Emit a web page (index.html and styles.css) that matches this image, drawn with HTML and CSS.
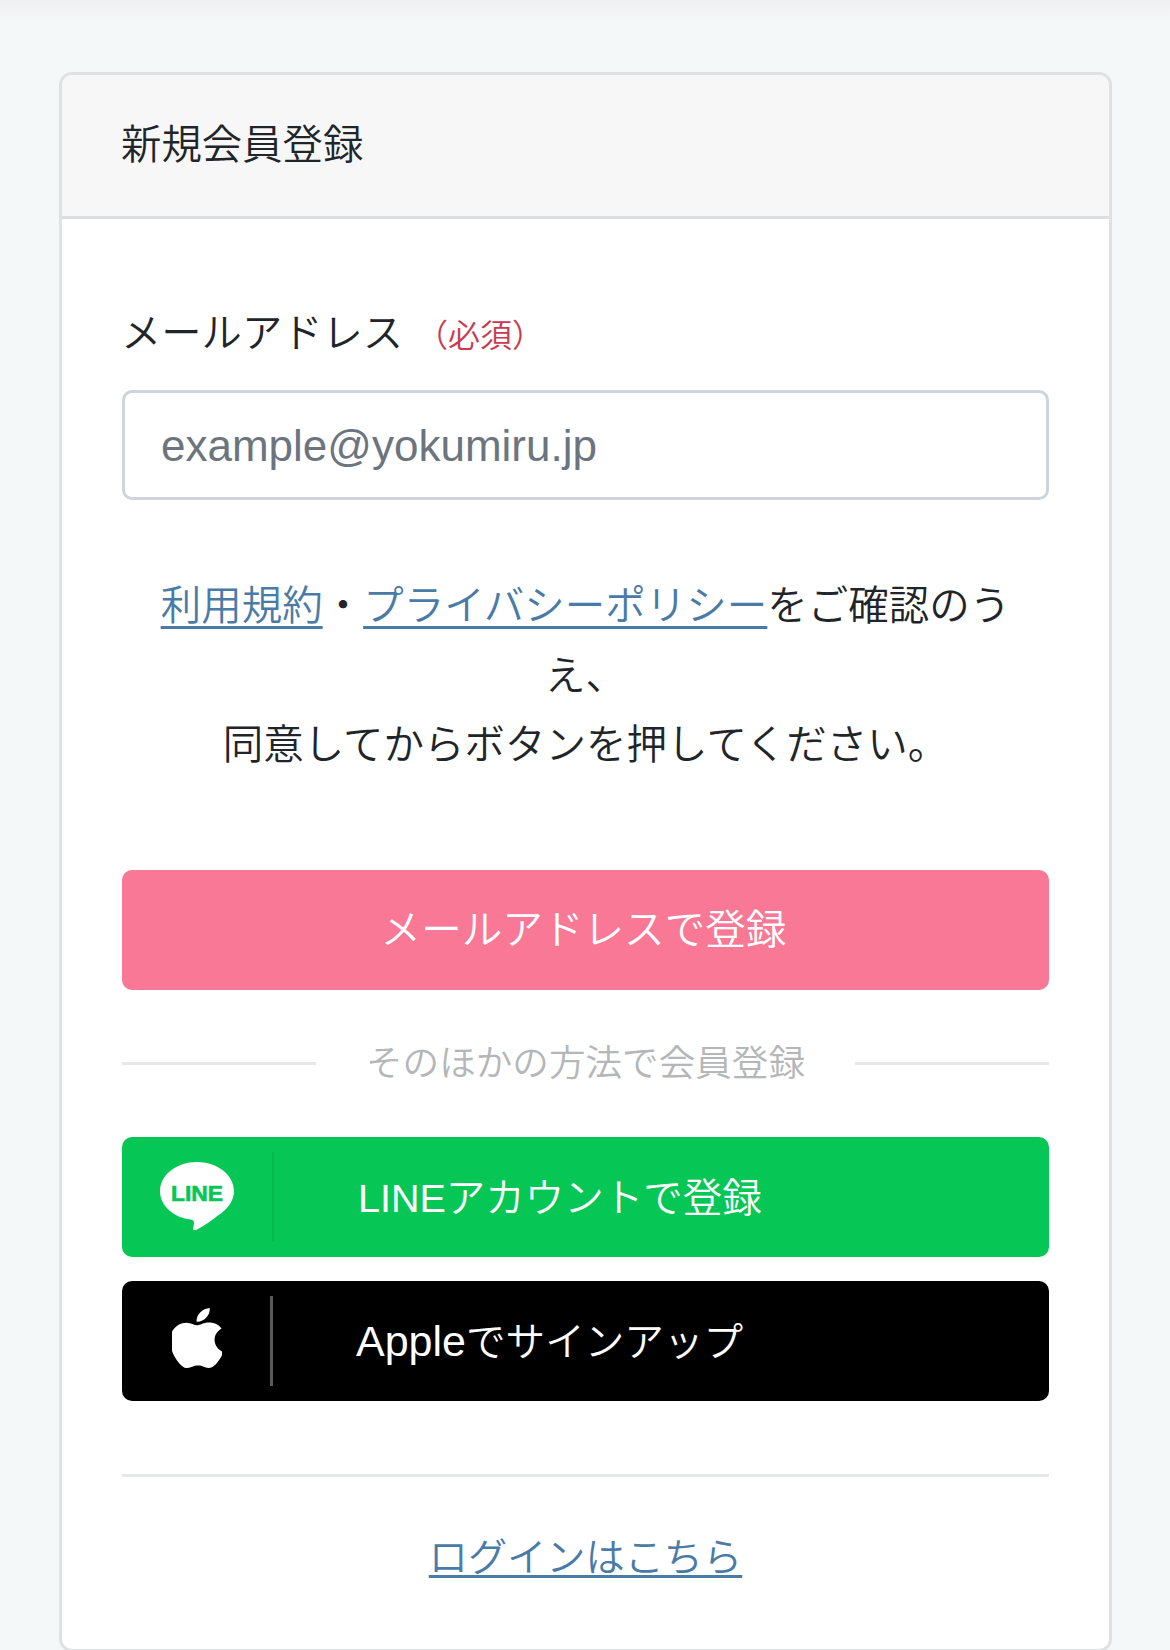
FILE: index.html
```html
<!DOCTYPE html>
<html lang="ja">
<head>
<meta charset="utf-8">
<title>新規会員登録</title>
<link rel="stylesheet" href="styles.css">
</head>
<body>
<main class="page">
  <section class="card">
    <h1 class="card-header">新規会員登録</h1>
    <div class="card-body">
      <label class="field-label" for="email">メールアドレス<span class="required">（必須）</span></label>
      <input class="field-input" id="email" type="email" placeholder="example@yokumiru.jp">
      <p class="terms"><a href="#">利用規約</a>・<a href="#">プライバシーポリシー</a>をご確認のう<br>え、<br>同意してからボタンを押してください。</p>
      <a class="btn btn-mail" href="#">メールアドレスで登録</a>
      <div class="divider"><span class="divider-text">そのほかの方法で会員登録</span></div>
      <a class="btn btn-social btn-line" href="#">
        <span class="btn-icon">
          <svg class="icon-line" viewBox="0 0 74 70" width="74" height="70" aria-hidden="true">
            <path class="bubble" d="M37 0C16.600 0 0 13 0 29c0 14.300 12.800 26.300 30.500 28.500 1.200.2 2.800.7 3.200 1.700.4.900.3 2.300.1 3.200l-.5 3.100c-.2 1-.8 3.800 3.100 2.200 3.800-1.600 13.500-7.800 21.500-14.200C67.500 47.500 74 39 74 29 74 13 57.400 0 37 0z"/>
            <text class="line-word" x="37" y="38.500" text-anchor="middle">LINE</text>
          </svg>
        </span>
        <span class="btn-sep"></span>
        <span class="btn-label">LINEアカウントで登録</span>
      </a>
      <a class="btn btn-social btn-apple" href="#">
        <span class="btn-icon">
          <svg class="icon-apple" viewBox="2.9 0 18.4 24" width="50" height="60" preserveAspectRatio="none" aria-hidden="true">
            <path d="M12.152 6.896c-.948 0-2.415-1.078-3.96-1.04-2.04.027-3.91 1.183-4.961 3.014-2.117 3.675-.546 9.103 1.519 12.09 1.013 1.454 2.208 3.09 3.792 3.039 1.52-.065 2.09-.987 3.935-.987 1.831 0 2.35.987 3.96.948 1.637-.026 2.676-1.48 3.676-2.948 1.156-1.688 1.636-3.325 1.662-3.415-.039-.013-3.182-1.221-3.22-4.857-.026-3.04 2.48-4.494 2.597-4.559-1.429-2.09-3.623-2.324-4.39-2.376-2-.156-3.675 1.09-4.61 1.09zM15.53 3.83c.843-1.012 1.4-2.427 1.245-3.83-1.207.052-2.662.805-3.532 1.818-.78.896-1.454 2.338-1.273 3.714 1.338.104 2.715-.688 3.559-1.701"/>
          </svg>
        </span>
        <span class="btn-sep"></span>
        <span class="btn-label"><span class="latin">Apple</span>でサインアップ</span>
      </a>
      <hr class="rule">
      <p class="login"><a href="#">ログインはこちら</a></p>
    </div>
  </section>
</main>
</body>
</html>
```

FILE: styles.css
```css
* { box-sizing: border-box; }
html, body { margin: 0; padding: 0; }
body {
  height: 1650px;
  overflow: hidden;
  font-family: "Liberation Sans", "Noto Sans CJK JP", sans-serif;
  font-size: 40px;
  font-weight: 350;
  color: #212529;
  background: linear-gradient(#eeeff1, #f5f8f9 22px) no-repeat #f5f8f9;
}
a { color: #4a7ba6; }
.page { padding: 72px 58px 0 59px; }
.card {
  height: 1580px;
  background: #fff;
  border: 3px solid #dfe2e3;
  border-radius: 13px;
  overflow: hidden;
}
.card-header {
  margin: 0;
  height: 144px;
  padding: 0 0 8px 59px;
  display: flex;
  align-items: center;
  font-size: 40.4px;
  font-weight: 350;
  background: #f7f7f7;
  border-bottom: 3px solid #dcdfe0;
}
.card-body { padding: 85px 60px 0; }
.field-label { display: block; margin-left: -1px; font-size: 40.3px; line-height: 60px; }
.required { color: #cb3a50; font-size: 32px; margin-left: 13px; }
.field-input {
  display: block;
  width: 100%;
  height: 110px;
  margin-top: 24px;
  padding: 1px 36px 0;
  font: 44px "Liberation Sans", sans-serif;
  color: #495057;
  background: #fff;
  border: 3px solid #ced4da;
  border-radius: 10px;
  outline: 0;
}
.field-input::placeholder { color: #6c757d; opacity: 1; }
.terms {
  margin: 72px 0 0;
  font-size: 40.5px;
  line-height: 69.5px;
  text-align: center;
}
.terms a, .login a { text-underline-offset: 6px; text-decoration-thickness: 3px; }
.btn {
  display: flex;
  align-items: center;
  height: 120px;
  border-radius: 10px;
  color: #fff;
  text-decoration: none;
}
.btn-mail {
  margin-top: 89px;
  padding: 0 4px 6px 0;
  justify-content: center;
  font-size: 40.6px;
  background: #f87896;
}
.divider {
  display: flex;
  align-items: center;
  gap: 50px;
  margin-top: 44px;
  font-size: 36.6px;
  line-height: 60px;
  color: #b4b6b8;
}
.divider::before, .divider::after {
  content: "";
  flex: 1;
  height: 3px;
  background: #e7e8e9;
}
.btn-social { margin-top: 24px; }
.btn-line { margin-top: 43px; font-size: 39.5px; background: #06c755; }
.btn-apple { font-size: 39.6px; background: #000; }
.btn-icon {
  flex: none;
  width: 150px;
  display: flex;
  justify-content: center;
}
.btn-apple .btn-icon { padding-bottom: 5px; }
.btn-sep { flex: none; width: 2px; height: 90px; background: #05b84e; }
.btn-apple .btn-sep { width: 3px; background: #5a5a5a; margin-left: -2px; }
.btn-label { margin-left: 84px; padding-bottom: 5px; }
.btn-apple .btn-label { margin-left: 83px; }
.latin { font-size: 43px; }
.icon-line, .icon-apple { display: block; }
.bubble { fill: #fff; }
.line-word {
  font: 700 22.8px "Liberation Sans", sans-serif;
  fill: #06c755;
  stroke: #06c755;
  stroke-width: 0.7px;
}
.icon-apple path { fill: #fff; }
.rule {
  margin: 73px 0 0;
  height: 3px;
  border: 0;
  background: #e7e8e9;
}
.login { margin: 51px 0 0; font-size: 39.2px; line-height: 60px; text-align: center; }
.login a { text-underline-offset: 4px; }
```
